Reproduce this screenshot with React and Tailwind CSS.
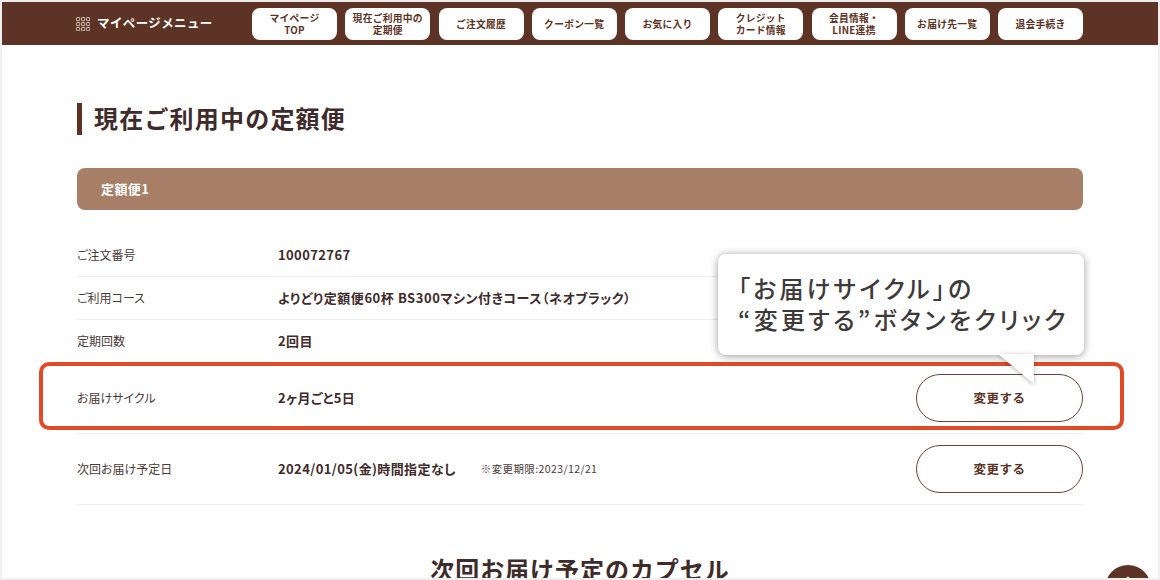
import { ChevronUp } from "lucide-react";

const navItems = [
  ["マイページ", "TOP"],
  ["現在ご利用中の", "定期便"],
  ["ご注文履歴"],
  ["クーポン一覧"],
  ["お気に入り"],
  ["クレジット", "カード情報"],
  ["会員情報・", "LINE連携"],
  ["お届け先一覧"],
  ["退会手続き"],
];

function MenuIcon() {
  const cells = [0, 5, 10];
  return (
    <svg width="14" height="14" viewBox="0 0 14 14" fill="none" stroke="#d9cdc6" strokeWidth="0.9">
      {cells.map((y) =>
        cells.map((x) => <rect key={`${x}-${y}`} x={x + 0.5} y={y + 0.5} width="3.2" height="3.2" rx="0.6" />)
      )}
    </svg>
  );
}

function ChangeButton() {
  return (
    <button className="w-[167px] h-[47.5px] rounded-full border border-[#6b4434] bg-white text-[12.5px] font-bold text-[#5c3325] tracking-[0.04em]">
      変更する
    </button>
  );
}

function Row({ label, children, button }) {
  return (
    <div className={`flex items-center border-b border-[#f0eeec] ${button ? "h-[71px]" : "h-[43px]"}`}>
      <div className="w-[201px] shrink-0 text-[12px] text-[#4a3a36] [font-feature-settings:'palt']">{label}</div>
      <div className="flex-1 flex items-center text-[13px] font-bold text-[#3e2b2a] tracking-[0.03em] [font-feature-settings:'palt']">
        {children}
      </div>
      {button && <ChangeButton />}
    </div>
  );
}

export default function App() {
  return (
    <div className="relative w-[1160px] h-[580px] overflow-hidden bg-[#efefef] p-[2px] font-['Noto_Sans_CJK_JP',sans-serif]">
      <div className="h-[576px] w-[1156px] overflow-hidden bg-white">
        <header className="flex items-center h-[43px] bg-[#5c3325] pl-[74px]">
          <div className="flex items-center gap-[7px] w-[176px] text-[12.5px] font-bold text-white tracking-[0.03em]">
            <MenuIcon />
            <span>マイページメニュー</span>
          </div>
          <nav className="flex gap-[8.25px]">
            {navItems.map((lines) => (
              <a
                key={lines[0]}
                className="flex flex-col items-center justify-center w-[85px] h-[32px] rounded-[8px] bg-white text-[9.75px] leading-[12px] font-bold text-[#5c3325] tracking-[0.03em]"
              >
                {lines.map((line) => (
                  <span key={line}>{line}</span>
                ))}
              </a>
            ))}
          </nav>
        </header>

        <main className="pl-[75px] pr-[75px]">
          <h1 className="mt-[58px] h-[32px] flex items-center border-l-[5px] border-[#5c3325] pl-[12px] pb-[3px] text-[24px] font-bold text-[#3e2b2a] tracking-[0.05em]">
            現在ご利用中の定額便
          </h1>
          <div className="mt-[33px] h-[42px] flex items-center rounded-[8px] bg-[#a67f66] pl-[24px] text-[13px] font-bold text-white tracking-[0.03em]">
            定額便1
          </div>

          <div className="mt-[24px]">
            <Row label="ご注文番号">100072767</Row>
            <Row label="ご利用コース">
              <span className="tracking-[0.043em]">よりどり定額便60杯 BS300マシン付きコース（ネオブラック）</span>
            </Row>
            <Row label="定期回数">2回目</Row>
            <Row label="お届けサイクル" button>
              2ヶ月ごと5日
            </Row>
            <Row label="次回お届け予定日" button>
              2024/01/05(金)時間指定なし
              <span className="ml-[25px] text-[10.5px] font-normal text-[#4a3a36]">※変更期限:2023/12/21</span>
            </Row>
          </div>

          <h2 className="mt-[46px] text-center text-[24px] font-bold text-[#3e2b2a] tracking-[0.04em]">
            次回お届け予定のカプセル
          </h2>
        </main>
      </div>

      {/* highlight + callout sit over the rows */}
      <div className="absolute left-[39px] top-[362px] w-[1085px] h-[68px] rounded-[10px] border-[4px] border-[#e04a26]" />

      <div className="absolute left-[718px] top-[254px] w-[366px] h-[101px] rounded-[8px] bg-white pl-[20px] pt-[18px] text-[24px] leading-[31px] font-medium text-[#3e3a39] tracking-[0.135em] [font-feature-settings:'palt'] shadow-[0_1px_8px_rgba(0,0,0,0.4)]">
        <div className="whitespace-nowrap">「お届けサイクル」の</div>
        <div className="whitespace-nowrap">“変更する”ボタンをクリック</div>
      </div>
      <svg className="absolute left-[998px] top-[354px] [filter:drop-shadow(0_1px_2px_rgba(0,0,0,0.3))]" width="37" height="31" viewBox="0 0 37 31">
        <path d="M0 0 L36 0 L36 30 Z" fill="#fff" />
      </svg>

      <div className="absolute left-[1105px] top-[565px] w-[46px] h-[46px] rounded-full bg-[#5c3325] flex justify-center">
        <ChevronUp size={18} color="#fff" strokeWidth={3} className="mt-[6px]" />
      </div>
      <div className="absolute left-0 bottom-0 w-full h-[2px] bg-[#efefef]" />
    </div>
  );
}
